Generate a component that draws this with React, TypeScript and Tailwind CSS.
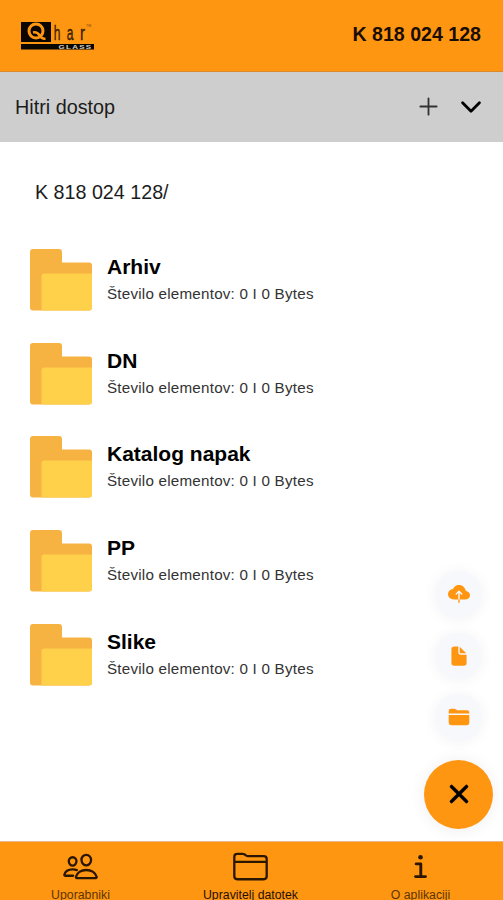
import { useState } from "react";
import {
    IoAdd,
    IoChevronDown,
    IoClose,
    IoCloudUpload,
    IoDocument,
    IoFolder,
    IoFolderOutline,
    IoInformationOutline,
    IoPeopleOutline,
} from "react-icons/io5";

interface FolderItem {
    name: string;
    count: number;
    size: string;
}

const folders: FolderItem[] = [
    { name: "Arhiv", count: 0, size: "0 Bytes" },
    { name: "DN", count: 0, size: "0 Bytes" },
    { name: "Katalog napak", count: 0, size: "0 Bytes" },
    { name: "PP", count: 0, size: "0 Bytes" },
    { name: "Slike", count: 0, size: "0 Bytes" },
];

const actions = [
    { label: "Naloži", Icon: IoCloudUpload },
    { label: "Nov dokument", Icon: IoDocument },
    { label: "Nova mapa", Icon: IoFolder },
];

const tabs = [
    { label: "Uporabniki", Icon: IoPeopleOutline },
    { label: "Upravitelj datotek", Icon: IoFolderOutline },
    { label: "O aplikaciji", Icon: IoInformationOutline },
];

function Logo() {
    return (
        <svg width="76" height="30" viewBox="0 0 76 30" className="mt-[2px] shrink-0">
            <rect x="1" y="2" width="30" height="20" fill="#0b0600" />
            <circle cx="16" cy="11" r="7" fill="none" stroke="#ff9612" strokeWidth="3" />
            <path
                d="M13 12.500c3-.8 5 .5 6.500 2.800 1.300 2.200 3 3.700 6 3.400"
                fill="none"
                stroke="#ff9612"
                strokeWidth="2.6"
            />
            <g fill="#3a2100" stroke="#3a2100" strokeWidth=".4" fontFamily="Liberation Sans, sans-serif" fontSize="20">
                <text transform="translate(33.8 20) scale(.6 1)">h</text>
                <text transform="translate(46.8 20) scale(.6 1)">a</text>
                <text transform="translate(60 20) scale(.75 1)">r</text>
            </g>
            <text x="66" y="6.5" fill="#7a4a10" fontFamily="Liberation Sans, sans-serif" fontSize="3.5">
                TM
            </text>
            <rect x="1" y="24" width="73" height="5.5" fill="#0b0600" />
            <text
                x="38.5"
                y="28.9"
                textLength="34"
                lengthAdjust="spacingAndGlyphs"
                fill="#d9d5cf"
                fontFamily="Liberation Sans, sans-serif"
                fontSize="6"
                fontWeight="bold"
                letterSpacing="1"
            >
                GLASS
            </text>
        </svg>
    );
}

function FolderPicture() {
    return (
        <svg width="62" height="62" viewBox="0 0 62 62" className="shrink-0">
            <path
                d="M3 0h26a3 3 0 0 1 3 3v10.5h27a3 3 0 0 1 3 3V58.500a3 3 0 0 1-3 3H3a3 3 0 0 1-3-3V3a3 3 0 0 1 3-3z"
                fill="#f7b342"
            />
            <path d="M14.5 24.500H62v34a3 3 0 0 1-3 3H11.5V27.500a3 3 0 0 1 3-3z" fill="#ffd04a" />
        </svg>
    );
}

function FolderRow({ folder }: { folder: FolderItem }) {
    return (
        <li className="flex h-[93.6px] items-start gap-[15px]">
            <FolderPicture />
            <div className="pt-[4px]">
                <h2 className="text-[21px] leading-[27px] font-bold">{folder.name}</h2>
                <p className="text-[15.2px] leading-[27px] tracking-[0.22px] whitespace-nowrap text-[#333]">
                    Število elementov: {folder.count} I {folder.size}
                </p>
            </div>
        </li>
    );
}

export default function App() {
    const [activeTab, setActiveTab] = useState(1);

    return (
        <div className="relative flex h-[900px] w-[503px] flex-col overflow-hidden bg-white font-['Liberation_Sans',Arial,sans-serif] text-black">

            {/* Header */}
            <header className="flex h-[72px] shrink-0 items-center justify-between border-b border-[#d98a2c] bg-[#ff9612] pr-[22px] pb-[3px] pl-5">
                <Logo />
                <span className="text-[19.6px] leading-6 font-bold text-[#1a0d00]">K 818 024 128</span>
            </header>

            {/* Quick access */}
            <div className="flex h-[69.5px] shrink-0 items-center justify-between bg-[#cecece] pr-[17px] pl-[15px]">
                <span className="text-[19.8px] leading-6 text-[#1c1c1c]">Hitri dostop</span>
                <div className="flex items-center gap-[13px]">
                    <IoAdd size={29} className="text-[#333]" />
                    <IoChevronDown size={30} />
                </div>
            </div>

            <main className="flex-1 overflow-hidden">
                <p className="mt-[37px] pl-[35px] text-[19.7px] leading-[26px] text-[#1c1c1c]">K 818 024 128/</p>
                <ul className="mt-[44.8px] pl-[30px]">
                    {folders.map((folder) => (
                        <FolderRow key={folder.name} folder={folder} />
                    ))}
                </ul>
            </main>

            {/* Floating actions */}
            <div className="absolute top-[571px] right-[10px] flex w-[69px] flex-col items-center">
                {actions.map(({ label, Icon }) => (
                    <button
                        key={label}
                        aria-label={label}
                        className="mb-[15px] flex size-[46.5px] items-center justify-center rounded-full bg-[#f6f8fc] text-[#ff9612] shadow-[0_1px_12px_3px_rgba(0,0,0,0.035)]"
                    >
                        <Icon size={22} />
                    </button>
                ))}
                <button
                    aria-label="Zapri"
                    className="mt-[4px] flex size-[69px] items-center justify-center rounded-full bg-[#ff9612] shadow-[0_1px_14px_3px_rgba(0,0,0,0.05)]"
                >
                    <IoClose size={34} strokeWidth={6} />
                </button>
            </div>

            {/* Tab bar */}
            <nav className="z-10 grid h-[59px] shrink-0 grid-cols-[161px_179px_161px] border-t border-[#e8b98a] bg-[#ff9612]">
                {tabs.map(({ label, Icon }, i) => (
                    <button
                        key={label}
                        onClick={() => setActiveTab(i)}
                        className={`flex flex-col items-center pt-[5.5px] ${i === activeTab ? "text-[#1f1000]" : "text-[#5c3500]"}`}
                    >
                        <Icon size={37} className="shrink-0 text-[#2b1700]" />
                        <span className="mt-[3.5px] text-[12.3px] leading-[14px] whitespace-nowrap">{label}</span>
                    </button>
                ))}
            </nav>
        </div>
    );
}
